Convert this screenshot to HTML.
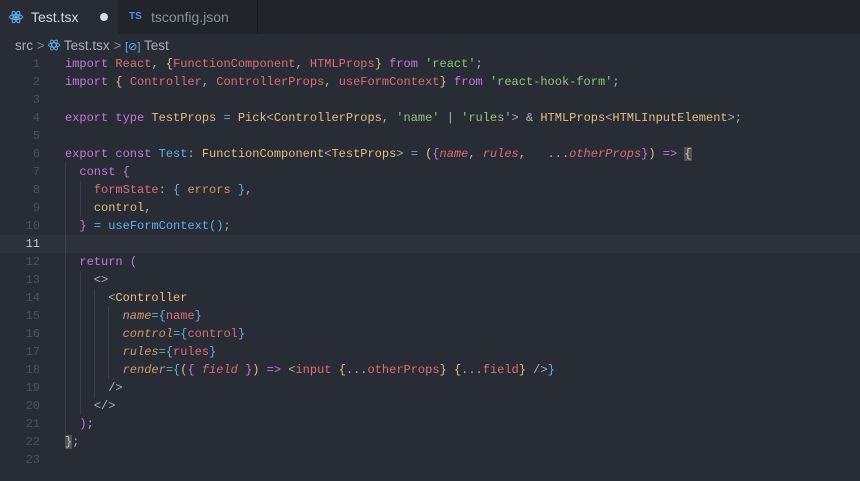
<!DOCTYPE html>
<html><head><meta charset="utf-8"><style>
body{margin:0;width:860px;height:481px;background:#282c34;overflow:hidden;font-family:"Liberation Sans",sans-serif;position:relative}
.tabs{position:absolute;left:0;top:0;width:860px;height:34px;background:#21252b}
.tab{position:absolute;top:0;height:34px;font-size:14px;line-height:34px}
.t1{left:0;width:118px;background:#282c34;color:#d7dae0}
.t2{left:119px;width:138px;color:#8b919d;border-right:1px solid #181a1f}
.crumb{position:absolute;top:38px;left:15px;font-size:13.5px;color:#a9afbb;line-height:16px}
.code{position:absolute;left:0;top:55px;font-family:"Liberation Mono",monospace;font-size:12px;color:#abb2bf}
.l{position:absolute;left:0;height:18px;line-height:18px;white-space:pre;width:860px}
.n{position:absolute;left:0;width:40px;text-align:right;color:#495162}
.c{position:absolute;left:65px}
.k{color:#c678dd}.r{color:#e06c75}.y{color:#e5c07b}.g{color:#98c379}.cy{color:#56b6c2}.b{color:#61afef}.o{color:#d19a66}.i{font-style:italic}
.gd{position:absolute;width:1px;background:#3b4048}
</style></head><body>
<div class="tabs">
<div class="tab t1"><svg style="position:absolute;left:9px;top:10px" width="14" height="14" viewBox="-7 -7 14 14" fill="none" stroke="#61afef" stroke-width="1"><ellipse rx="6.5" ry="2.5"/><ellipse rx="6.5" ry="2.5" transform="rotate(60)"/><ellipse rx="6.5" ry="2.5" transform="rotate(120)"/><circle r="1.2" fill="#61afef"/></svg><span style="position:absolute;left:31px">Test.tsx</span><span style="position:absolute;left:100px;top:13px;width:8px;height:8px;border-radius:4px;background:#d7dae0"></span></div>
<div class="tab t2"><span style="position:absolute;left:10px;font-size:10px;font-weight:bold;color:#4d8ee0">TS</span><span style="position:absolute;left:32px">tsconfig.json</span></div>
</div>
<div class="crumb">src <span style="color:#7f848e">&gt;</span> <svg width="12" height="12" viewBox="-7 -7 14 14" fill="none" stroke="#61afef" stroke-width="1" style="vertical-align:-1px"><ellipse rx="6.5" ry="2.5"/><ellipse rx="6.5" ry="2.5" transform="rotate(60)"/><ellipse rx="6.5" ry="2.5" transform="rotate(120)"/></svg> Test.tsx <span style="color:#7f848e">&gt;</span> <span style="color:#61afef;font-size:11px">[⊘]</span> Test</div>
<div style="position:absolute;left:0;top:235px;width:860px;height:18px;background:#2c313c"></div>
<div class="gd" style="left:65px;top:163px;height:270px"></div>
<div class="gd" style="left:80px;top:181px;height:36px"></div>
<div class="gd" style="left:80px;top:271px;height:144px"></div>
<div class="gd" style="left:94px;top:289px;height:108px"></div>
<div class="gd" style="left:108px;top:307px;height:72px"></div>
<div class="code">
<div class="l" style="top:0"><span class="n">1</span><span class="c"><span class="k">import</span> <span class="r">React</span>, <span class="y">{</span><span class="r">FunctionComponent</span>, <span class="r">HTMLProps</span><span class="y">}</span> <span class="k">from</span> <span class="g">'react'</span>;</span></div>
<div class="l" style="top:18px"><span class="n">2</span><span class="c"><span class="k">import</span> <span class="y">{</span> <span class="r">Controller</span>, <span class="r">ControllerProps</span>, <span class="r">useFormContext</span><span class="y">}</span> <span class="k">from</span> <span class="g">'react-hook-form'</span>;</span></div>
<div class="l" style="top:36px"><span class="n">3</span></div>
<div class="l" style="top:54px"><span class="n">4</span><span class="c"><span class="k">export type</span> <span class="y">TestProps</span> <span class="cy">=</span> <span class="y">Pick</span>&lt;<span class="y">ControllerProps</span>, <span class="g">'name'</span> | <span class="g">'rules'</span>&gt; &amp; <span class="y">HTMLProps</span>&lt;<span class="y">HTMLInputElement</span>&gt;;</span></div>
<div class="l" style="top:72px"><span class="n">5</span></div>
<div class="l" style="top:90px"><span class="n">6</span><span class="c"><span class="k">export const</span> <span class="b">Test</span>: <span class="y">FunctionComponent</span>&lt;<span class="y">TestProps</span>&gt; <span class="cy">=</span> <span class="y">(</span><span class="k">{</span><span class="r i">name</span>, <span class="r i">rules</span>,   ...<span class="r i">otherProps</span><span class="k">}</span><span class="y">)</span> <span class="k">=&gt;</span> <span class="y" style="background:#4b5263">{</span></span></div>
<div class="l" style="top:108px"><span class="n">7</span><span class="c">  <span class="k">const {</span></span></div>
<div class="l" style="top:126px"><span class="n">8</span><span class="c">    <span class="r">formState</span>: <span class="b">{</span> <span class="o">errors</span> <span class="b">}</span>,</span></div>
<div class="l" style="top:144px"><span class="n">9</span><span class="c">    <span class="y">control</span>,</span></div>
<div class="l" style="top:162px"><span class="n">10</span><span class="c">  <span class="k">}</span> <span class="cy">=</span> <span class="b">useFormContext</span><span class="b">()</span>;</span></div>
<div class="l" style="top:180px"><span class="n" style="color:#c5c8ce">11</span></div>
<div class="l" style="top:198px"><span class="n">12</span><span class="c">  <span class="k">return (</span></span></div>
<div class="l" style="top:216px"><span class="n">13</span><span class="c">    &lt;&gt;</span></div>
<div class="l" style="top:234px"><span class="n">14</span><span class="c">      &lt;<span class="y">Controller</span></span></div>
<div class="l" style="top:252px"><span class="n">15</span><span class="c">        <span class="o i">name</span><span class="cy">=</span><span class="b">{</span><span class="r">name</span><span class="b">}</span></span></div>
<div class="l" style="top:270px"><span class="n">16</span><span class="c">        <span class="o i">control</span><span class="cy">=</span><span class="b">{</span><span class="r">control</span><span class="b">}</span></span></div>
<div class="l" style="top:288px"><span class="n">17</span><span class="c">        <span class="o i">rules</span><span class="cy">=</span><span class="b">{</span><span class="r">rules</span><span class="b">}</span></span></div>
<div class="l" style="top:306px"><span class="n">18</span><span class="c">        <span class="o i">render</span><span class="cy">=</span><span class="b">{</span><span class="y">(</span><span class="k">{</span> <span class="r i">field</span> <span class="k">}</span><span class="y">)</span> <span class="k">=&gt;</span> &lt;<span class="r">input</span> <span class="y">{</span>...<span class="r">otherProps</span><span class="y">}</span> <span class="y">{</span>...<span class="r">field</span><span class="y">}</span> /&gt;<span class="b">}</span></span></div>
<div class="l" style="top:324px"><span class="n">19</span><span class="c">      /&gt;</span></div>
<div class="l" style="top:342px"><span class="n">20</span><span class="c">    &lt;/&gt;</span></div>
<div class="l" style="top:360px"><span class="n">21</span><span class="c">  <span class="k">)</span>;</span></div>
<div class="l" style="top:378px"><span class="n">22</span><span class="c"><span class="y" style="background:#4b5263">}</span>;</span></div>
<div class="l" style="top:396px"><span class="n">23</span></div>
</div>
</body></html>
